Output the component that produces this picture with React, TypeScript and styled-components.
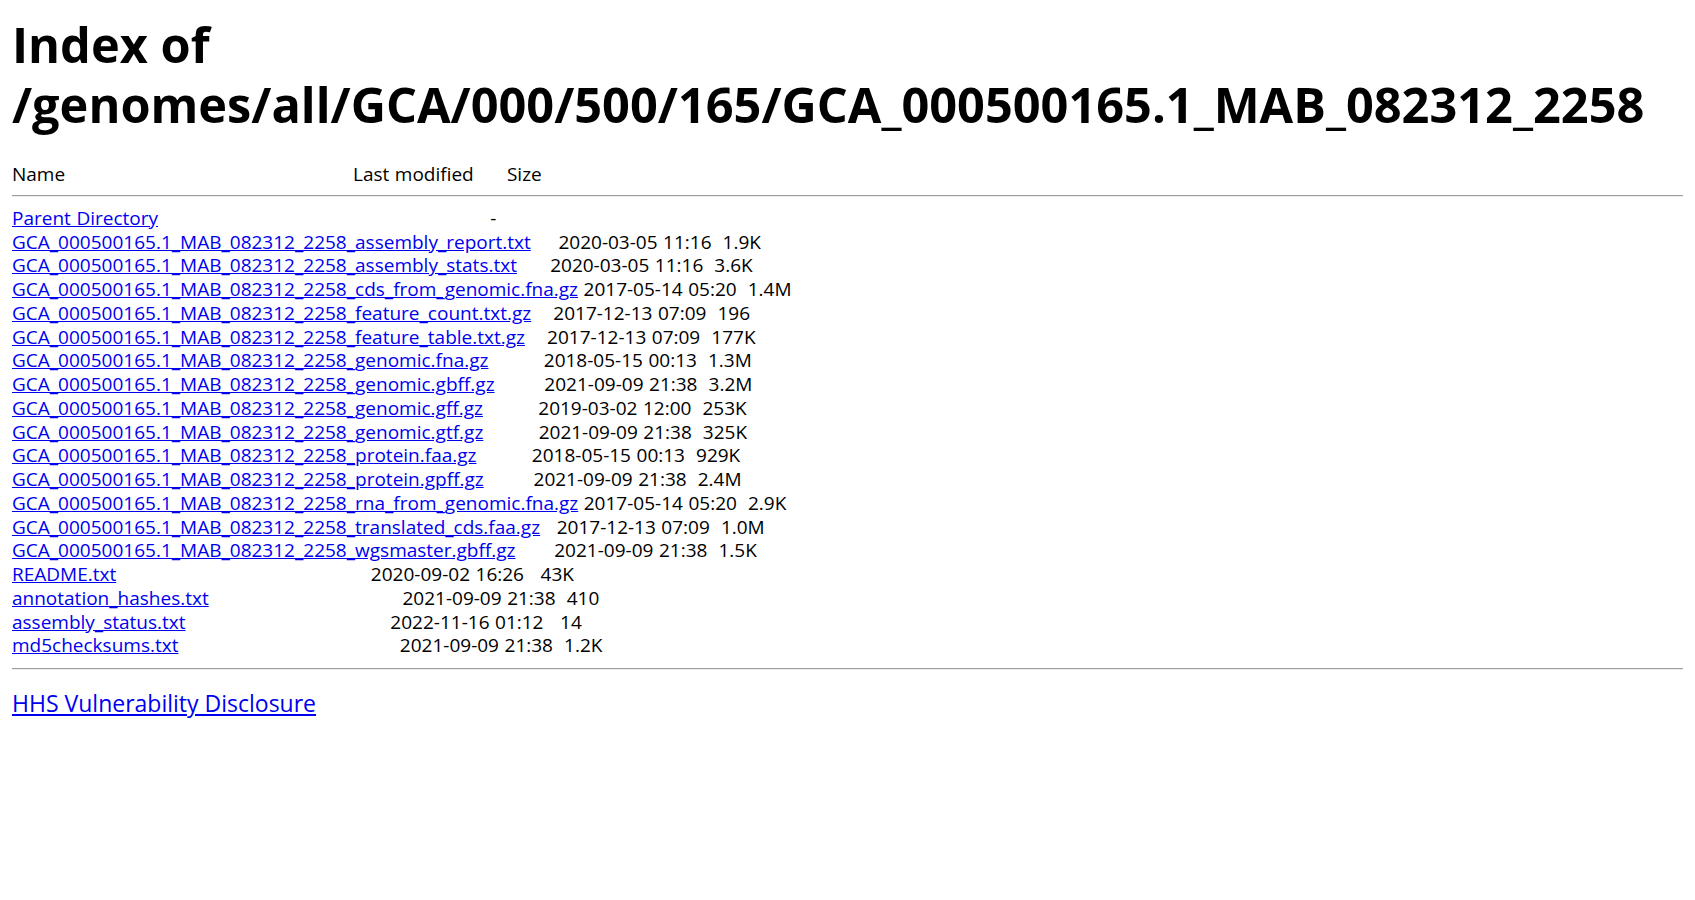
import React from 'react';
import styled, { createGlobalStyle } from 'styled-components';

const GlobalStyle = createGlobalStyle`
  body {
    margin: 12px;
    background: #ffffff;
    color: #000000;
    font-family: "Open Sans", "Noto Sans", Arial, sans-serif;
  }
`;

const Title = styled.h1`
  margin: 2px 0 29px;
  font-size: 48.7px;
  line-height: 60px;
  font-weight: 700;
`;

const Listing = styled.pre`
  margin: 0;
  font-family: "Open Sans", "Noto Sans", Arial, sans-serif;
  font-size: 19px;
  line-height: 23.75px;
  word-spacing: 0.6px;
  white-space: pre;
`;

const Rule = styled.hr<{ $top: number; $bottom: number }>`
  margin: ${({ $top }) => $top}px 0 ${({ $bottom }) => $bottom}px;
  border: none;
  border-top: 1px solid #9c9c9c;
  border-bottom: 1px solid #eeeeee;
  height: 0;
`;

const FileLink = styled.a`
  color: #0000ee;
  text-decoration: underline;
`;

const FooterLink = styled.a`
  display: inline-block;
  margin-top: 17px;
  color: #0000ee;
  font-size: 23px;
  text-decoration: underline;
`;

type Entry = { name: string; date: string; size: string };

const PREFIX = 'GCA_000500165.1_MAB_082312_2258_';
const COL = 56;

const entries: Entry[] = [
  { name: PREFIX + 'assembly_report.txt', date: '2020-03-05 11:16', size: '1.9K' },
  { name: PREFIX + 'assembly_stats.txt', date: '2020-03-05 11:16', size: '3.6K' },
  { name: PREFIX + 'cds_from_genomic.fna.gz', date: '2017-05-14 05:20', size: '1.4M' },
  { name: PREFIX + 'feature_count.txt.gz', date: '2017-12-13 07:09', size: '196 ' },
  { name: PREFIX + 'feature_table.txt.gz', date: '2017-12-13 07:09', size: '177K' },
  { name: PREFIX + 'genomic.fna.gz', date: '2018-05-15 00:13', size: '1.3M' },
  { name: PREFIX + 'genomic.gbff.gz', date: '2021-09-09 21:38', size: '3.2M' },
  { name: PREFIX + 'genomic.gff.gz', date: '2019-03-02 12:00', size: '253K' },
  { name: PREFIX + 'genomic.gtf.gz', date: '2021-09-09 21:38', size: '325K' },
  { name: PREFIX + 'protein.faa.gz', date: '2018-05-15 00:13', size: '929K' },
  { name: PREFIX + 'protein.gpff.gz', date: '2021-09-09 21:38', size: '2.4M' },
  { name: PREFIX + 'rna_from_genomic.fna.gz', date: '2017-05-14 05:20', size: '2.9K' },
  { name: PREFIX + 'translated_cds.faa.gz', date: '2017-12-13 07:09', size: '1.0M' },
  { name: PREFIX + 'wgsmaster.gbff.gz', date: '2021-09-09 21:38', size: '1.5K' },
  { name: 'README.txt', date: '2020-09-02 16:26', size: ' 43K' },
  { name: 'annotation_hashes.txt', date: '2021-09-09 21:38', size: '410 ' },
  { name: 'assembly_status.txt', date: '2022-11-16 01:12', size: ' 14 ' },
  { name: 'md5checksums.txt', date: '2021-09-09 21:38', size: '1.2K' },
];

// pad like the apache listing does, columns are counted in characters
const pad = (text: string) => ' '.repeat(Math.max(1, COL - text.length));

const App: React.FC = () => {
  return (
    <>
      <GlobalStyle />
      <Title>
        Index of
        <br />
        /genomes/all/GCA/000/500/165/GCA_000500165.1_MAB_082312_2258
      </Title>
      <Listing>{'Name' + pad('Name') + 'Last modified      Size'}</Listing>
      <Rule $top={8} $bottom={10} />
      <Listing>
        <FileLink href="#">Parent Directory</FileLink>
        {pad('Parent Directory') + ' '.repeat(18) + '  - ' + '\n'}
        {entries.map((e, i) => (
          <React.Fragment key={e.name}>
            <FileLink href="#">{e.name}</FileLink>
            {pad(e.name) + e.date + '  ' + e.size + (i < entries.length - 1 ? '\n' : '')}
          </React.Fragment>
        ))}
      </Listing>
      <Rule $top={10} $bottom={0} />
      <FooterLink href="#">HHS Vulnerability Disclosure</FooterLink>
    </>
  );
};

export default App;
